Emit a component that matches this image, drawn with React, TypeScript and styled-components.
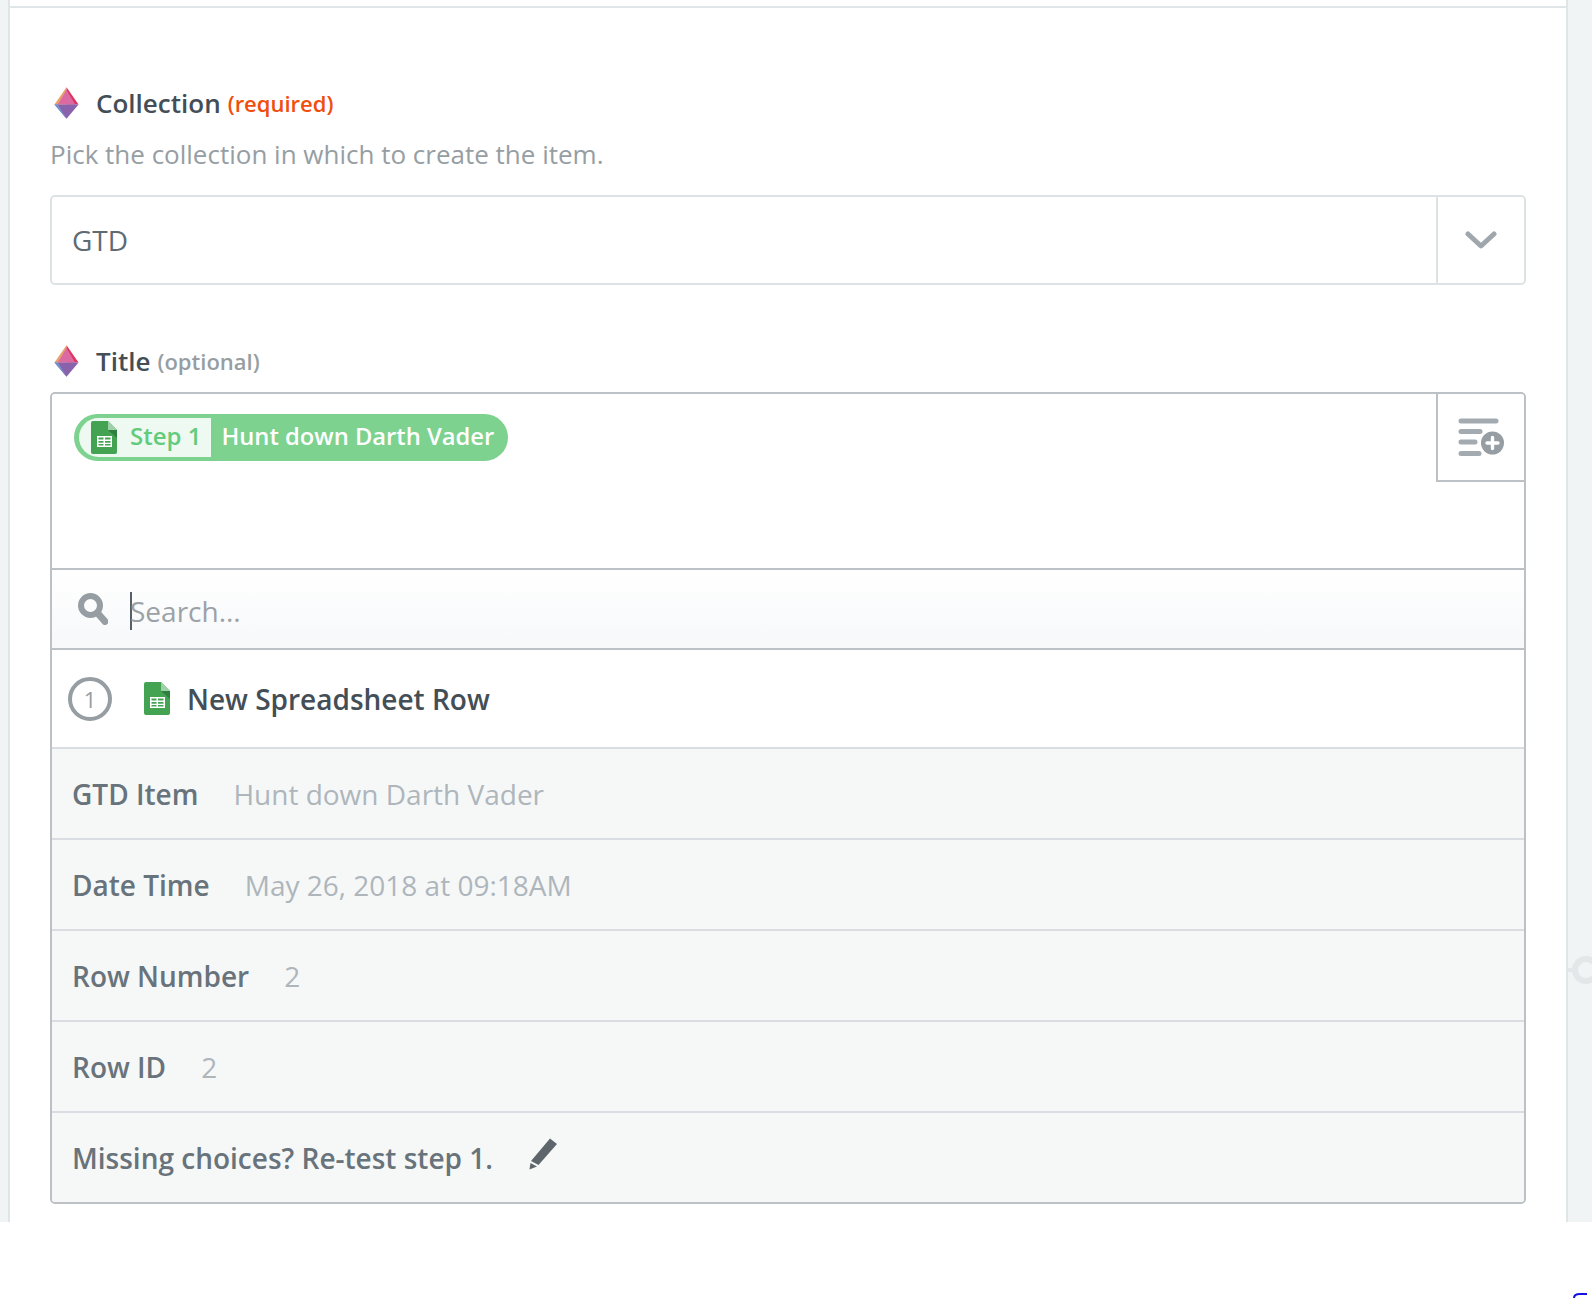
import React from 'react';
import styled, { createGlobalStyle } from 'styled-components';

const GlobalStyle = createGlobalStyle`
  html, body {
    margin: 0;
    padding: 0;
    background: #fff;
    font-family: 'Open Sans', 'Liberation Sans', sans-serif;
  }
  * {
    box-sizing: border-box;
  }
`;

const Page = styled.div`
  position: relative;
  width: 1592px;
  height: 1298px;
  overflow: hidden;
  background: #fff;
`;

const Canvas = styled.div`
  height: 1222px;
  padding: 0 24px 0 8px;
  background: #f1f4f5;
`;

const Panel = styled.div`
  height: 100%;
  background: #fff;
  border-left: 2px solid #e0e5e8;
  border-right: 2px solid #e0e5e8;
`;

const TopStrip = styled.div`
  height: 8px;
  border-bottom: 2px solid #e0e5e8;
`;

const Form = styled.div`
  padding: 77px 40px 0 40px;
`;

const LabelRow = styled.div`
  display: flex;
  align-items: center;
  height: 36px;
  padding-left: 4px;
`;

const FieldName = styled.span`
  margin-left: 17px;
  font-size: 26px;
  font-weight: 600;
  color: #434e56;
`;

const Hint = styled.span<{ $tone: 'required' | 'optional' }>`
  margin-left: 7px;
  font-size: 22px;
  font-weight: 600;
  color: ${({ $tone }) => ($tone === 'required' ? '#f04e0c' : '#969ea3')};
`;

const HelpText = styled.p`
  margin: 15px 0 0;
  font-size: 26px;
  line-height: 36px;
  color: #969ea3;
`;

const SelectBox = styled.div`
  display: flex;
  height: 90px;
  margin: 23px 0 58px;
  border: 2px solid #dde2e5;
  border-radius: 5px;
`;

const SelectValue = styled.div`
  flex: 1;
  display: flex;
  align-items: center;
  padding-left: 20px;
  font-size: 28px;
  color: #5f6b73;
`;

const SelectCaret = styled.div`
  width: 88px;
  display: flex;
  align-items: center;
  justify-content: center;
  border-left: 2px solid #dde2e5;
`;

const TitleBox = styled.div`
  margin-top: 13px;
  border: 2px solid #bcc1c5;
  border-radius: 5px;
  overflow: hidden;
`;

const TokenArea = styled.div`
  display: flex;
  justify-content: space-between;
  align-items: flex-start;
  height: 174px;
  padding-left: 22px;
  background: #fff;
`;

const Pill = styled.div`
  display: flex;
  align-items: center;
  height: 47px;
  margin-top: 20px;
  padding: 4px 14px 4px 5px;
  border-radius: 24px;
  background: #7dd28f;
`;

const PillStep = styled.div`
  display: flex;
  align-items: center;
  height: 39px;
  padding: 0 10px 0 12px;
  border-radius: 20px 0 0 20px;
  background: #eef9f1;
  font-size: 24px;
  font-weight: 600;
  color: #63cb7c;
`;

const StepName = styled.span`
  margin-left: 13px;
  padding-bottom: 4px;
`;

const PillValue = styled.span`
  margin-left: 10px;
  padding-bottom: 3px;
  font-size: 23.75px;
  font-weight: 600;
  color: #fff;
`;

const FieldsButton = styled.div`
  width: 88px;
  height: 88px;
  display: flex;
  align-items: center;
  justify-content: center;
  border-left: 2px solid #bcc1c5;
  border-bottom: 2px solid #bcc1c5;
`;

const SearchRow = styled.div`
  display: flex;
  align-items: center;
  height: 80px;
  padding-left: 26px;
  border-top: 2px solid #bcc1c5;
  background: linear-gradient(#fff, #f7f8fa);
`;

const SearchPlaceholder = styled.div`
  margin: 3px 0 0 22px;
  border-left: 2px solid #55606a;
  height: 38px;
  line-height: 38px;
  font-size: 28px;
  text-indent: -2px;
  color: #9aa2a7;
`;

const StepRow = styled.div`
  display: flex;
  align-items: center;
  height: 99px;
  padding-left: 16px;
  border-top: 2px solid #bcc1c5;
  background: #fff;
`;

const StepBadge = styled.div`
  width: 44px;
  height: 44px;
  display: flex;
  align-items: center;
  justify-content: center;
  border: 4px solid #969ea3;
  border-radius: 50%;
  font-size: 22px;
  color: #969ea3;
`;

const StepTitle = styled.span`
  margin-left: 17px;
  font-size: 28px;
  font-weight: 600;
  color: #434e56;
`;

const StepIcon = styled.span`
  display: flex;
  margin-left: 32px;
`;

const DataRow = styled.div`
  display: flex;
  align-items: center;
  height: 91px;
  padding-left: 20px;
  border-top: 2px solid #d9dde1;
  background: #f6f8f8;
  font-size: 28px;
`;

const DataKey = styled.span`
  font-weight: 600;
  color: #68737b;
`;

const DataValue = styled.span`
  margin-left: 35px;
  color: #aeb6bc;
`;

const PencilSlot = styled.span`
  display: flex;
  margin: -8px 0 0 36px;
`;

const Connector = styled.svg`
  position: absolute;
  left: 1566px;
  top: 950px;
`;

const StrayLink = styled.svg`
  position: absolute;
  left: 1572px;
  top: 1292px;
`;

const Gem = () => (
  <svg width="25" height="32" viewBox="0 0 26 33">
    <polygon points="13,0 0.5,18 13,18" fill="#e9a06b" />
    <polygon points="13,0 25.5,18 13,18" fill="#e0345f" />
    <polygon points="13,3 4,18 22,18" fill="#dc6aa2" />
    <polygon points="0.5,18 25.5,18 13,33" fill="#8a62ab" />
    <polygon points="0.5,18 4,18 13,33" fill="#6f93d0" />
  </svg>
);

const SheetIcon = ({ size = 26 }: { size?: number }) => (
  <svg width={size} height={size * 1.27} viewBox="0 0 26 33">
    <path d="M2 0h15l9 9v22a2 2 0 0 1-2 2H2a2 2 0 0 1-2-2V2a2 2 0 0 1 2-2z" fill="#43a353" />
    <path d="M17 0l9 9h-9z" fill="#9fd1a8" />
    <path d="M17 9l9 8V9z" fill="#2f7f3f" />
    <path d="M6 15h15v11H6z" fill="#fff" />
    <path d="M7.5 16.5h5v2h-5zM14 16.5h5.5v2H14zM7.5 20h5v1.8h-5zM14 20h5.5v1.8H14zM7.5 23h5v1.6h-5zM14 23h5.5v1.6H14z" fill="#43a353" />
  </svg>
);

const Chevron = () => (
  <svg width="32" height="20" viewBox="0 0 32 20">
    <path d="M3 4l13 12L29 4" fill="none" stroke="#a0a7ac" strokeWidth="5" strokeLinecap="round" strokeLinejoin="round" />
  </svg>
);

const ListPlus = () => (
  <svg width="46" height="39" viewBox="0 0 46 39">
    <g stroke="#a4abb0" strokeWidth="5" strokeLinecap="round">
      <path d="M3 3h35M3 13.500h19M3 24h14M3 35.500h18" />
    </g>
    <circle cx="34.500" cy="25" r="11.500" fill="#969ea3" />
    <path d="M34.500 19.500v11M29 25h11" stroke="#fff" strokeWidth="3.400" strokeLinecap="round" />
  </svg>
);

const Magnifier = () => (
  <svg width="30" height="32" viewBox="0 0 30 32">
    <circle cx="12.500" cy="12.500" r="9.500" fill="none" stroke="#969ea3" strokeWidth="6" />
    <path d="M19.500 20l7.500 8.500" stroke="#969ea3" strokeWidth="7" strokeLinecap="round" />
  </svg>
);

const Pencil = () => (
  <svg width="30" height="33" viewBox="0 0 30 33">
    <path d="M21 1.500l7 5.500L9.500 28 2 24z" fill="#5f666b" />
    <path d="M1.500 26l6.500 3.500L0.500 32.500z" fill="#5f666b" />
  </svg>
);

const rows = [
  { key: 'GTD Item', value: 'Hunt down Darth Vader' },
  { key: 'Date Time', value: 'May 26, 2018 at 09:18AM' },
  { key: 'Row Number', value: '2' },
  { key: 'Row ID', value: '2' },
];

export default function App() {
  return (
    <Page>
      <GlobalStyle />
      <Canvas>
        <Panel>
          <TopStrip />
          <Form>
            <LabelRow>
              <Gem />
              <FieldName>Collection</FieldName>
              <Hint $tone="required">(required)</Hint>
            </LabelRow>
            <HelpText>Pick the collection in which to create the item.</HelpText>
            <SelectBox>
              <SelectValue>GTD</SelectValue>
              <SelectCaret>
                <Chevron />
              </SelectCaret>
            </SelectBox>
            <LabelRow>
              <Gem />
              <FieldName>Title</FieldName>
              <Hint $tone="optional">(optional)</Hint>
            </LabelRow>
            <TitleBox>
              <TokenArea>
                <Pill>
                  <PillStep>
                    <SheetIcon />
                    <StepName>Step 1</StepName>
                  </PillStep>
                  <PillValue>Hunt down Darth Vader</PillValue>
                </Pill>
                <FieldsButton>
                  <ListPlus />
                </FieldsButton>
              </TokenArea>
              <SearchRow>
                <Magnifier />
                <SearchPlaceholder>Search...</SearchPlaceholder>
              </SearchRow>
              <StepRow>
                <StepBadge>1</StepBadge>
                <StepIcon>
                  <SheetIcon />
                </StepIcon>
                <StepTitle>New Spreadsheet Row</StepTitle>
              </StepRow>
              {rows.map((row) => (
                <DataRow key={row.key}>
                  <DataKey>{row.key}</DataKey>
                  <DataValue>{row.value}</DataValue>
                </DataRow>
              ))}
              <DataRow>
                <DataKey>Missing choices? Re-test step 1.</DataKey>
                <PencilSlot>
                  <Pencil />
                </PencilSlot>
              </DataRow>
            </TitleBox>
          </Form>
        </Panel>
      </Canvas>
      <Connector width="26" height="40" viewBox="0 0 26 40">
        <circle cx="20" cy="20" r="11" fill="none" stroke="#e3e7ea" strokeWidth="6" />
        <path d="M2 20h8" stroke="#e3e7ea" strokeWidth="4" />
      </Connector>
      <StrayLink width="20" height="6" viewBox="0 0 20 6">
        <path d="M2 6c0-3 3-4 6-4h7" fill="none" stroke="#1414e0" strokeWidth="2" />
      </StrayLink>
    </Page>
  );
}
